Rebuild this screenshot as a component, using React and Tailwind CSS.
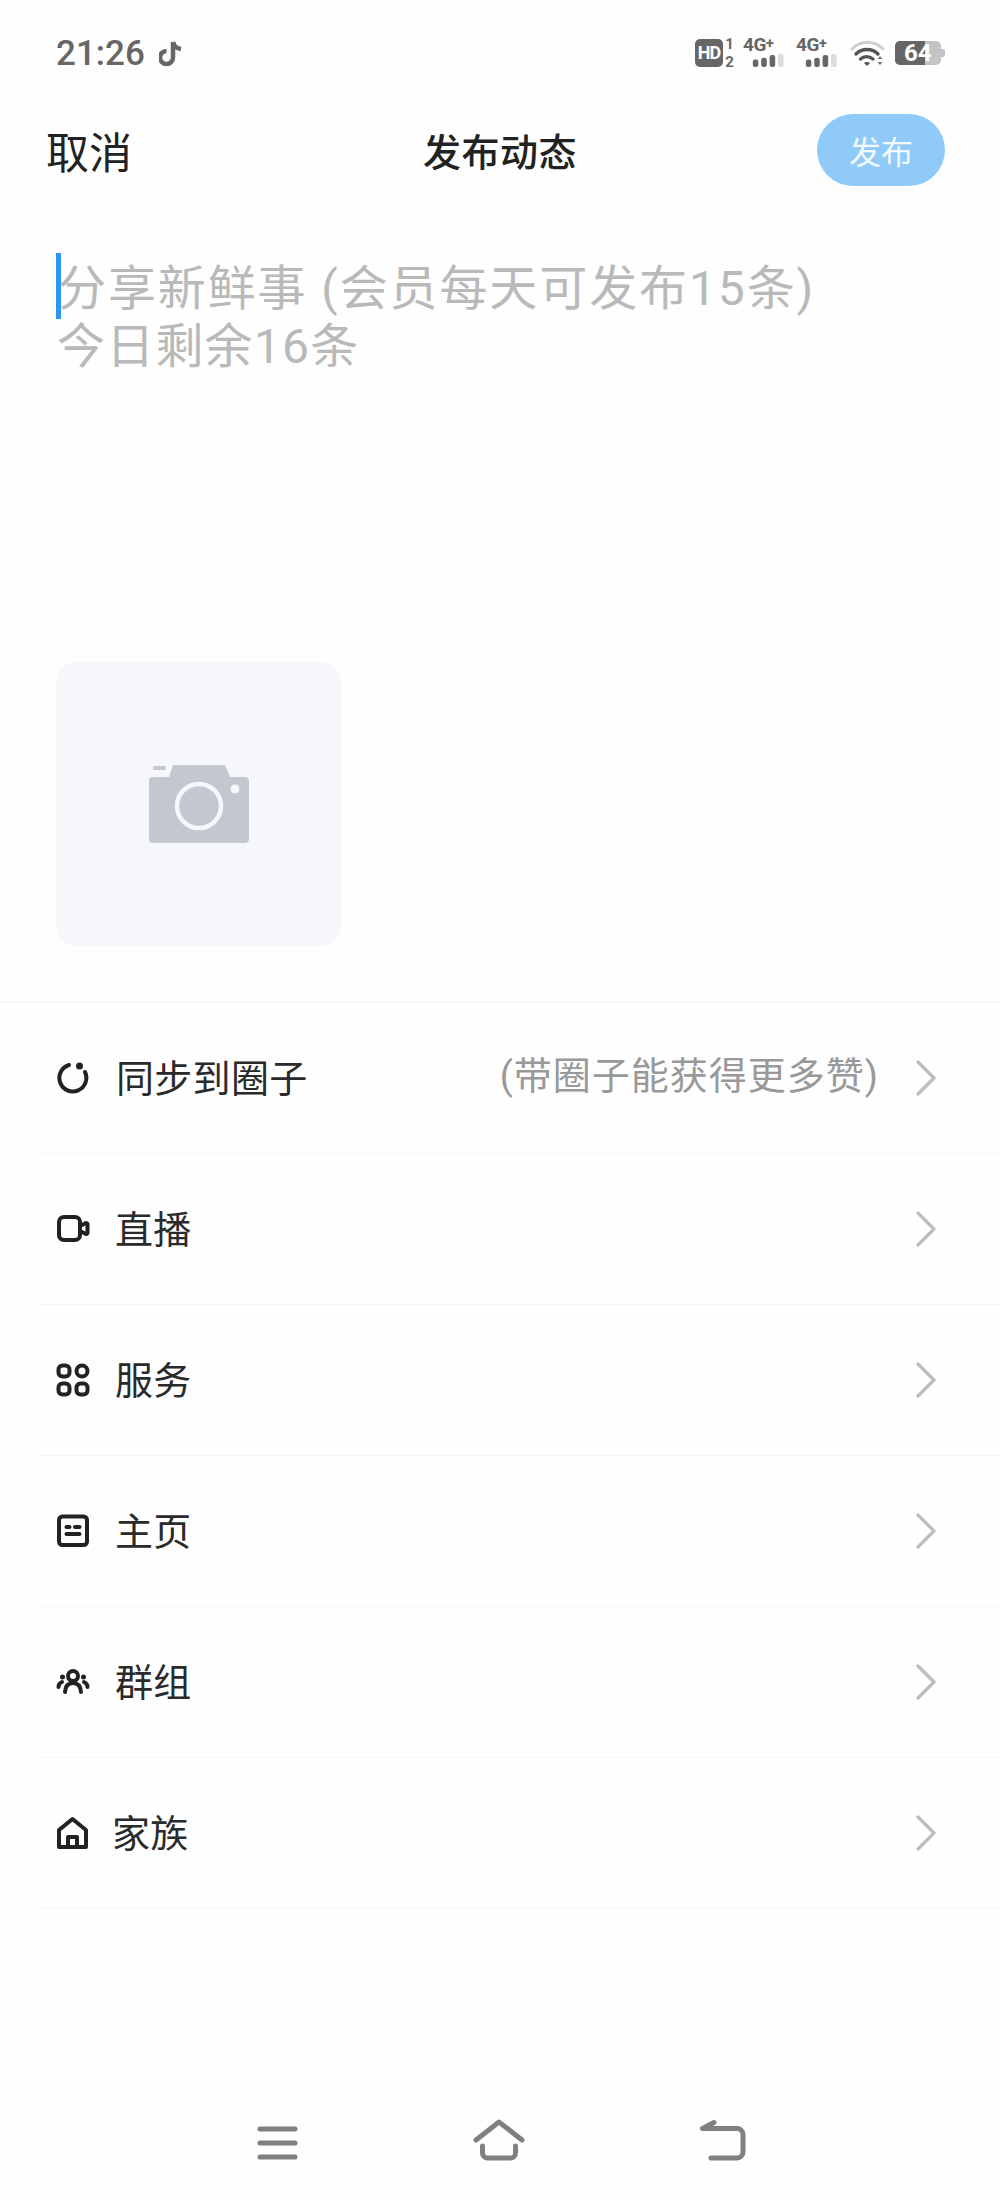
const cjk = "font-['Noto_Sans_CJK_SC','Noto_Sans',sans-serif]";
const mixed = "font-['Roboto','Noto_Sans_CJK_SC',sans-serif]";

function Signal() {
  return (
    <div className="flex flex-col w-[42px] h-[30px]">
      <span className="font-['Roboto',sans-serif] font-bold text-[19px] leading-[14px] text-[#666] tracking-[-0.5px] whitespace-nowrap">4G<span className="text-[15px] relative -top-[3px]">+</span></span>
      <svg width="42" height="15" viewBox="0 0 42 15" className="mt-[1px]">
        <rect x="9" y="6" width="6" height="8" rx="2.500" fill="#666" />
        <rect x="18" y="4" width="6" height="10" rx="2.500" fill="#666" />
        <rect x="27" y="1" width="6" height="13" rx="2.500" fill="#666" />
        <rect x="36" y="0" width="6" height="14" rx="2" fill="#ddd" />
      </svg>
    </div>
  );
}

function StatusIcons() {
  return (
    <div className="flex items-center">
      <div className="w-[28px] h-[28px] rounded-[5px] bg-[#666] text-white font-['Roboto',sans-serif] font-bold text-[18px] leading-[28px] text-center tracking-[-1px]">HD</div>
      <div className="w-[9px] ml-[2px] flex flex-col items-center text-[#666] font-['Roboto',sans-serif] font-bold text-[15px] leading-[18px]">
        <span>1</span>
        <span>2</span>
      </div>
      <div className="ml-[9px]"><Signal /></div>
      <div className="ml-[11px]"><Signal /></div>
      <svg width="36" height="28" viewBox="0 0 36 28" className="ml-[12px]">
        <path d="M2 10 C11 1 24 1 33 10" fill="none" stroke="#cfcfcf" strokeWidth="3" strokeLinecap="round" />
        <path d="M6 15 C12 9 22 9 28 15" fill="none" stroke="#555" strokeWidth="3.400" strokeLinecap="round" />
        <path d="M10.500 20 C14 17 19 17 23 20" fill="none" stroke="#555" strokeWidth="3.400" strokeLinecap="round" />
        <path d="M14 24 L17 27 L20 24 C18.500 22.800 15.500 22.800 14 24Z" fill="#555" />
        <path d="M30 17 l2.500 3 h-5z M30 26 l2.500 -3 h-5z" fill="#777" />
      </svg>
      <div className="ml-[9px] relative w-[50px] h-[24px]">
        <div className="w-[46px] h-[24px] rounded-[5px] bg-[#c4c4c4] overflow-hidden">
          <div className="w-[30px] h-full bg-[#666]" />
        </div>
        <div className="absolute right-0 top-[8px] w-[4px] h-[8px] rounded-r-[2px] bg-[#c4c4c4]" />
        <div className="absolute left-[9px] top-0 font-['Roboto',sans-serif] font-bold text-[24px] leading-[24px] text-white">64</div>
      </div>
    </div>
  );
}

function StatusBar() {
  return (
    <div className="h-[106px] pl-[56px] pr-[55px] flex items-center justify-between">
      <div className="flex items-center">
        <span className="font-['Roboto',sans-serif] font-medium text-[35px] leading-none text-[#666]">21:26</span>
        <svg width="26" height="28" viewBox="0 0 26 28" className="ml-[14px]">
          <path d="M14 3 V18.500 A6.500 6.500 0 1 1 7.500 12" fill="none" stroke="#666" strokeWidth="4.500" />
          <path d="M14 3 C15 7 18 9.500 22 10" fill="none" stroke="#666" strokeWidth="4.500" />
        </svg>
      </div>
      <StatusIcons />
    </div>
  );
}

function NavBar() {
  return (
    <div className={`h-[88px] pl-[46px] pr-[55px] flex items-center justify-between relative ${cjk}`}>
      <span className="text-[43px] leading-none text-[#222] w-[377px]">取消</span>
      <span className="text-[38px] leading-none tracking-[0.5px] text-[#222] font-medium">发布动态</span>
      <button className="ml-[240px] w-[128px] h-[72px] rounded-full bg-[#90caf9] text-[#f2f9ff] text-[32px] leading-none">发布</button>
    </div>
  );
}

function Composer() {
  return (
    <div className={`relative pt-[66px] pl-[57px] text-[48px] leading-[58px] text-[#b9b9b9] ${mixed}`}>
      <div className="absolute left-[56px] top-[59px] w-[5px] h-[66px] bg-[#2e96f0]" />
      <div className="whitespace-nowrap tracking-[1.9px] pl-[1px]">分享新鲜事 (会员每天可发布15条)</div>
      <div className="whitespace-nowrap tracking-[1.2px]">今日剩余16条</div>
    </div>
  );
}

function PhotoBox() {
  return (
    <div className="mt-[286px] ml-[56px] w-[285px] h-[284px] rounded-[20px] bg-[#f5f7fa] flex items-center justify-center">
      <svg width="100" height="80" viewBox="0 0 100 80">
        <rect x="4" y="2" width="13" height="4" rx="1.500" fill="#c3c7cf" />
        <path d="M4 13 H20 L24 1 H76 L81 13 H96 A4 4 0 0 1 100 17 V75 A4 4 0 0 1 96 79 H4 A4 4 0 0 1 0 75 V17 A4 4 0 0 1 4 13Z" fill="#c3c7cf" />
        <circle cx="50" cy="42" r="22" fill="none" stroke="#f5f7fa" strokeWidth="4.500" />
        <circle cx="86" cy="25" r="4.500" fill="#f5f7fa" />
      </svg>
    </div>
  );
}

const stroke = { fill: "none", stroke: "#222", strokeWidth: 4, strokeLinecap: "round", strokeLinejoin: "round" };

const IconCircle = () => (
  <svg width="34" height="34" viewBox="0 0 34 34">
    <path d="M13 4 A13.500 13.500 0 1 0 29 11" {...stroke} />
    <circle cx="23.500" cy="5" r="3.500" fill="#222" />
  </svg>
);
const IconVideo = () => (
  <svg width="34" height="34" viewBox="0 0 34 34">
    <rect x="3" y="5" width="21" height="23" rx="5" {...stroke} />
    <path d="M24 14 L29 11.500 A1.500 1.500 0 0 1 31.500 13 V20 A1.500 1.500 0 0 1 29 21.500 L24 19Z" {...stroke} />
  </svg>
);
const IconGrid = () => (
  <svg width="34" height="34" viewBox="0 0 34 34">
    <rect x="2.500" y="2.500" width="11" height="11" rx="4" {...stroke} />
    <rect x="20.500" y="2.500" width="11" height="11" rx="5.500" {...stroke} />
    <rect x="2.500" y="20.500" width="11" height="11" rx="4" {...stroke} />
    <rect x="20.500" y="20.500" width="11" height="11" rx="4" {...stroke} />
  </svg>
);
const IconCard = () => (
  <svg width="34" height="34" viewBox="0 0 34 34">
    <rect x="3" y="2.500" width="28" height="28.500" rx="3.500" {...stroke} />
    <path d="M10.500 13 H13.500 M19 13 H23.500 M10.500 20 H23.500" {...stroke} />
  </svg>
);
const IconGroup = () => (
  <svg width="34" height="28" viewBox="0 0 34 28">
    <circle cx="17" cy="8" r="5" {...stroke} />
    <path d="M9 24 C9.500 17.500 12.500 15 17 15 C21.500 15 24.500 17.500 25 24" {...stroke} />
    <circle cx="6.500" cy="9" r="2.500" fill="#222" />
    <circle cx="27.500" cy="9" r="2.500" fill="#222" />
    <path d="M2.500 19 C2.500 16.500 3.500 15 6 14 M31.500 19 C31.500 16.500 30.500 15 28 14" {...stroke} />
  </svg>
);
const IconHouse = () => (
  <svg width="34" height="34" viewBox="0 0 34 34">
    <path d="M3 31 V14 L16.500 3 L30 14 V31 Z" {...stroke} />
    <path d="M12 31 V21 H21 V31" {...stroke} />
  </svg>
);

function Row({ Icon, label, sub, labelClass }) {
  return (
    <div className="ml-[40px] h-[151px] border-b border-[#f6f6f6] flex items-center pl-[16px] pr-[64px]">
      <div className="w-[34px] flex justify-center"><Icon /></div>
      <span className={`${labelClass} pb-[4px] text-[38px] leading-none text-[#2a2a2a] tracking-[0.3px] ${cjk}`}>{label}</span>
      {sub && <span className={`ml-auto mr-[37px] pb-[4px] text-[38px] leading-none text-[#999] whitespace-nowrap tracking-[1px] ${mixed}`}>{sub}</span>}
      <svg width="20" height="36" viewBox="0 0 20 36" className={sub ? "" : "ml-auto"}>
        <path d="M2 2 L18 18 L2 34" fill="none" stroke="#bdbdbd" strokeWidth="3.200" strokeLinecap="round" strokeLinejoin="round" />
      </svg>
    </div>
  );
}

function SystemNav() {
  const s = { fill: "none", stroke: "#808080", strokeWidth: 5, strokeLinecap: "round", strokeLinejoin: "round" };
  return (
    <div className="mt-[210px] pl-[257px] flex items-start gap-[175px]">
      <svg width="41" height="36" viewBox="0 0 41 36" className="mt-[6px]">
        <path d="M3 4 H38 M3 18 H38 M3 32 H38" {...s} />
      </svg>
      <svg width="52" height="42" viewBox="0 0 52 42">
        <path d="M3 21 L26 3 L49 21" {...s} />
        <path d="M9.500 27 V34 A5 5 0 0 0 14.500 39 H37.500 A5 5 0 0 0 42.500 34 V27" {...s} />
      </svg>
      <svg width="46" height="42" viewBox="0 0 46 42">
        <path d="M14 3.500 L2.500 9.500 H37 A6 6 0 0 1 43 15.500 V33 A6 6 0 0 1 37 39 H11" {...s} />
      </svg>
    </div>
  );
}

export default function App() {
  return (
    <div className="w-[1000px] h-[2200px] bg-[#fefefe] overflow-hidden">
      <StatusBar />
      <NavBar />
      <Composer />
      <PhotoBox />
      <div className="mt-[56px] border-t border-[#f3f3f3]">
        <Row Icon={IconCircle} label="同步到圈子" sub="(带圈子能获得更多赞)" labelClass="ml-[26px]" />
        <Row Icon={IconVideo} label="直播" labelClass="ml-[25px]" />
        <Row Icon={IconGrid} label="服务" labelClass="ml-[25px]" />
        <Row Icon={IconCard} label="主页" labelClass="ml-[25px]" />
        <Row Icon={IconGroup} label="群组" labelClass="ml-[25px]" />
        <Row Icon={IconHouse} label="家族" labelClass="ml-[22px]" />
      </div>
      <SystemNav />
    </div>
  );
}
